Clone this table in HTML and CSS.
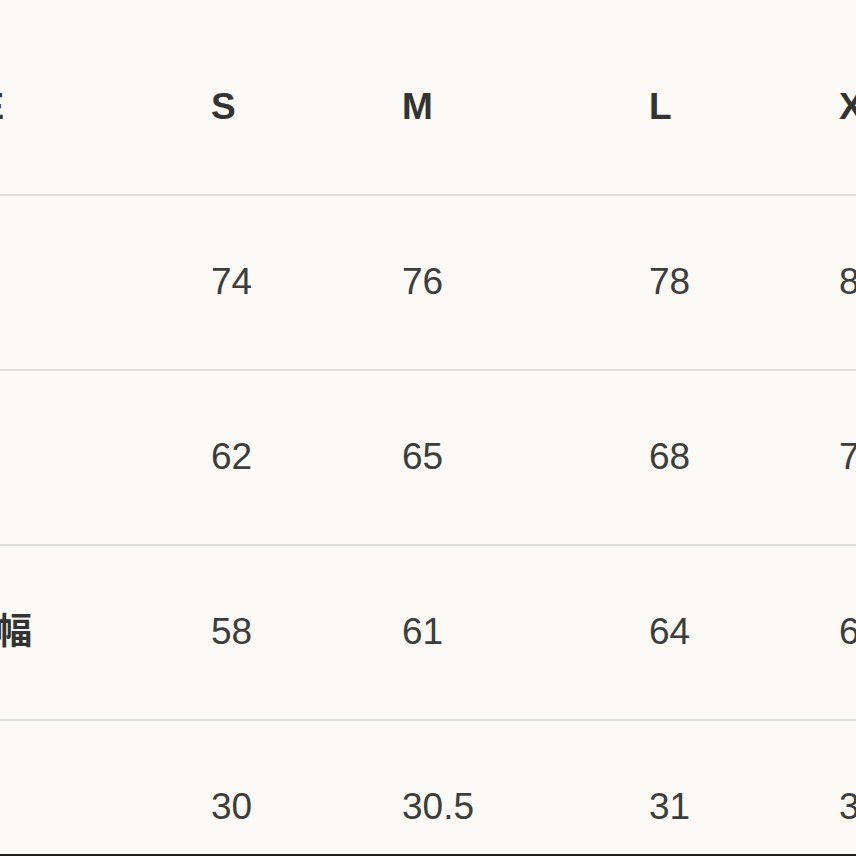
FILE: index.html
```html
<!DOCTYPE html>
<html lang="ja">
<head>
<meta charset="utf-8">
<title>サイズ表</title>
<link rel="stylesheet" href="styles.css">
</head>
<body>
<div class="viewport">
  <div class="size-table">
    <div class="row head">
      <div class="cell label">SIZE</div>
      <div class="cell">S</div>
      <div class="cell">M</div>
      <div class="cell">L</div>
      <div class="cell">XL</div>
    </div>
    <div class="row">
      <div class="cell label">着丈</div>
      <div class="cell">74</div>
      <div class="cell">76</div>
      <div class="cell">78</div>
      <div class="cell">80</div>
    </div>
    <div class="row">
      <div class="cell label">身幅</div>
      <div class="cell">62</div>
      <div class="cell">65</div>
      <div class="cell">68</div>
      <div class="cell">71</div>
    </div>
    <div class="row">
      <div class="cell label">総肩幅</div>
      <div class="cell">58</div>
      <div class="cell">61</div>
      <div class="cell">64</div>
      <div class="cell">67</div>
    </div>
    <div class="row">
      <div class="cell label">袖丈</div>
      <div class="cell">30</div>
      <div class="cell">30.5</div>
      <div class="cell">31</div>
      <div class="cell">31.5</div>
    </div>
  </div>
</div>
</body>
</html>
```
FILE: styles.css
```css
html, body {
  margin: 0;
  padding: 0;
  background: #fbfaf6;
}

.viewport {
  height: 856px;
  overflow: hidden;
  box-sizing: border-box;
  border-bottom: 2px solid #1f1f1f;
}

.size-table {
  margin-left: -76px;
  padding-top: 21px;
  width: 1112px;
  font-family: "Liberation Sans", "Noto Sans CJK JP", sans-serif;
  font-size: 37px;
  color: #3d3d3b;
}

.row {
  display: grid;
  grid-template-columns: 287px 191px 247px 190px 200px;
  height: 173px;
  align-items: center;
  border-bottom: 2px solid #e0ded9;
}

.cell {
  padding-bottom: 1px;
  line-height: 1.15;
  white-space: nowrap;
}

.head .cell,
.cell.label {
  font-weight: bold;
  color: #333331;
}

.cell.label {
  font-size: 36px;
}
```
